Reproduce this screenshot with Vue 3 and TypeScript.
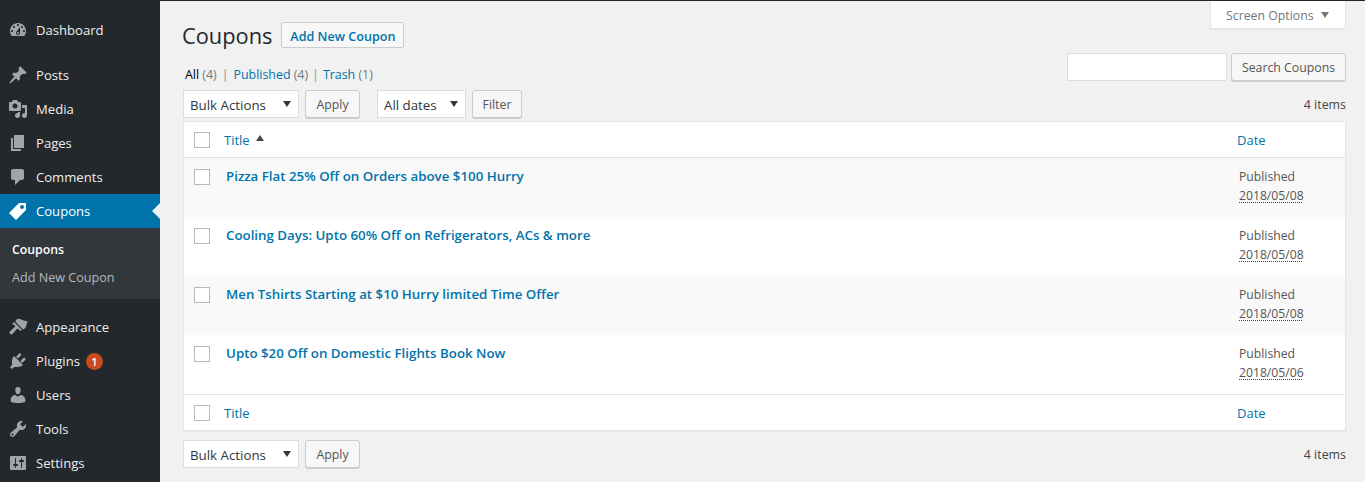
<script setup lang="ts">
interface MenuItem { label: string; icon: string; active?: boolean; badge?: string }
const icons: Record<string, string> = {
  dashboard: 'M3.76 16h12.48c1.1-1.37 1.76-3.11 1.76-5 0-4.42-3.58-8-8-8s-8 3.58-8 8c0 1.89.66 3.63 1.76 5zM10 4c.55 0 1 .45 1 1s-.45 1-1 1-1-.45-1-1 .45-1 1-1zM6 6c.55 0 1 .45 1 1s-.45 1-1 1-1-.45-1-1 .45-1 1-1zm8 0c.55 0 1 .45 1 1s-.45 1-1 1-1-.45-1-1 .45-1 1-1zm-5.370 5.550L12 7v6c0 1.100-.9 2-2 2s-2-.9-2-2c0-.57.24-1.080.63-1.450zM4 10c.55 0 1 .45 1 1s-.45 1-1 1-1-.45-1-1 .45-1 1-1zm12 0c.55 0 1 .45 1 1s-.45 1-1 1-1-.45-1-1 .45-1 1-1zm-5 3c0-.55-.45-1-1-1s-1 .45-1 1 .45 1 1 1 1-.45 1-1z',
  pin: 'M10.440 3.020l1.820-1.820 6.360 6.350-1.830 1.820c-1.050-.68-2.480-.57-3.410.36l-.75.75c-.92.93-1.040 2.350-.35 3.410l-1.830 1.820-2.410-2.410-2.800 2.790c-.42.42-3.380 2.710-3.800 2.290s1.860-3.390 2.280-3.810l2.790-2.790L4.100 9.360l1.830-1.820c1.050.69 2.480.57 3.400-.36l.75-.75c.93-.92 1.050-2.350.36-3.410z',
  media: 'M13 11V4c0-.55-.45-1-1-1h-1.670L9 1H5L3.670 3H2c-.55 0-1 .45-1 1v7c0 .55.45 1 1 1h10c.55 0 1-.45 1-1zM7 4.500c1.380 0 2.500 1.120 2.500 2.500S8.380 9.500 7 9.500 4.500 8.380 4.500 7 5.620 4.500 7 4.500zM14 6h5v10.500c0 1.380-1.120 2.500-2.500 2.500S14 17.880 14 16.500s1.120-2.500 2.500-2.500c.17 0 .34.020.5.050V9h-3V6zm-4 8.050V13h2v3.500c0 1.380-1.120 2.500-2.500 2.500S7 17.880 7 16.500 8.120 14 9.500 14c.17 0 .34.020.5.050z',
  pages: 'M6 15V2h10v13H6zm-1 1h8v2H3V5h2v11z',
  comments: 'M5 2h9c1.100 0 2 .9 2 2v7c0 1.100-.9 2-2 2h-2l-5 5v-5H5c-1.100 0-2-.9-2-2V4c0-1.100.9-2 2-2z',
  tag: 'M11 2h7v7L8 19l-7-7zm3 6c1.100 0 2-.9 2-2s-.9-2-2-2-2 .9-2 2 .9 2 2 2z',
  brush: 'M7.200 4.200L9.300 2c1.700-.8 3.800.4 5.600 1.300l4.800 1.200-1.300 3.500-.9 3-2.600 1.600zM6.300 5.200l7.500 7.500-.7.700c-.4.4-1 .4-1.400 0l-1.400-1.400c-.4-.4-1-.4-1.400 0l-4.800 5.200c-.4.400-1 .400-1.400 0l-1.100-1.100c-.4-.4-.4-1 0-1.400l5.300-4.900c.4-.4.4-1 0-1.400L4.700 7.500c-.4-.4-.4-1 0-1.400z',
  plug: 'M13.110 4.360L9.870 7.600 8 5.730l3.240-3.240c.35-.34 1.050-.2 1.560.32.520.51.660 1.210.310 1.550zm-8 1.770l.91-1.120 9.010 9.010-1.190.84c-.71.71-2.630 1.160-3.820 1.160H6.140L4.900 17.260c-.59.59-1.540.59-2.120 0-.59-.58-.59-1.530 0-2.120l1.240-1.240v-3.880c0-1.130.4-3.190 1.090-3.890zm7.260 3.970l3.240-3.240c.34-.35 1.040-.21 1.550.31.520.51.660 1.210.320 1.560l-3.240 3.240z',
  user: 'M10 9.250c-2.270 0-2.730-3.440-2.730-3.440C7 4.020 7.820 2 9.970 2c2.160 0 2.980 2.020 2.710 3.810 0 0-.41 3.440-2.680 3.440zm0 2.570L12.720 10c2.390 0 4.520 2.330 4.520 4.530v2.490s-3.650 1.130-7.240 1.130c-3.650 0-7.240-1.130-7.240-1.130v-2.490c0-2.250 1.940-4.480 4.470-4.480z',
  wrench: 'M16.680 9.770c-1.340 1.340-3.300 1.670-4.950.99l-5.410 6.520c-.99.99-2.590.99-3.580 0s-.99-2.590 0-3.570l6.520-5.420c-.68-1.650-.35-3.610.99-4.950 1.280-1.280 3.120-1.620 4.720-1.060l-2.890 2.890 2.820 2.820 2.860-2.870c.53 1.580.18 3.410-1.080 4.670zM3.810 16.210c.4.390 1.040.39 1.430 0 .4-.4.400-1.040 0-1.430-.39-.4-1.030-.4-1.430 0-.39.39-.39 1.030 0 1.430z',
  settings: 'M18 16V4c0-.55-.45-1-1-1H3c-.55 0-1 .45-1 1v12c0 .55.45 1 1 1h14c.55 0 1-.45 1-1zM8 11h1c.55 0 1 .45 1 1s-.45 1-1 1H8v1.500c0 .28-.22.5-.5.5s-.5-.22-.5-.5V13H6c-.55 0-1-.45-1-1s.45-1 1-1h1V5.500c0-.28.22-.5.5-.5s.5.22.5.5V11zm5-2h-1c-.55 0-1-.45-1-1s.45-1 1-1h1V5.500c0-.28.22-.5.5-.5s.5.22.5.5V7h1c.55 0 1 .45 1 1s-.45 1-1 1h-1v5.500c0 .28-.22.5-.5.5s-.5-.22-.5-.5V9z'
}
const topItems: MenuItem[] = [{ label: 'Dashboard', icon: 'dashboard' }]
const midItems: MenuItem[] = [
  { label: 'Posts', icon: 'pin' },
  { label: 'Media', icon: 'media' },
  { label: 'Pages', icon: 'pages' },
  { label: 'Comments', icon: 'comments' },
  { label: 'Coupons', icon: 'tag', active: true }
]
const lowItems: MenuItem[] = [
  { label: 'Appearance', icon: 'brush' },
  { label: 'Plugins', icon: 'plug', badge: '1' },
  { label: 'Users', icon: 'user' },
  { label: 'Tools', icon: 'wrench' },
  { label: 'Settings', icon: 'settings' }
]
const rows = [
  { title: 'Pizza Flat 25% Off on Orders above $100 Hurry', date: '2018/05/08' },
  { title: 'Cooling Days: Upto 60% Off on Refrigerators, ACs & more', date: '2018/05/08' },
  { title: 'Men Tshirts Starting at $10 Hurry limited Time Offer', date: '2018/05/08' },
  { title: 'Upto $20 Off on Domestic Flights Book Now', date: '2018/05/06' }
]
</script>

<template>
  <div class="page">
    <aside class="side">
      <ul class="menu first">
        <li v-for="m in topItems" :key="m.label" class="item">
          <svg class="ic" viewBox="0 0 20 20"><path :d="icons[m.icon]" fill-rule="evenodd" /></svg>
          <span>{{ m.label }}</span>
        </li>
      </ul>
      <ul class="menu second">
        <li v-for="m in midItems" :key="m.label" class="item" :class="{ active: m.active }">
          <svg class="ic" viewBox="0 0 20 20"><path :d="icons[m.icon]" fill-rule="evenodd" /></svg>
          <span>{{ m.label }}</span>
        </li>
      </ul>
      <ul class="sub">
        <li class="cur">Coupons</li>
        <li>Add New Coupon</li>
      </ul>
      <ul class="menu third">
        <li v-for="m in lowItems" :key="m.label" class="item">
          <svg class="ic" viewBox="0 0 20 20"><path :d="icons[m.icon]" fill-rule="evenodd" /></svg>
          <span>{{ m.label }}</span>
          <b v-if="m.badge" class="badge">{{ m.badge }}</b>
        </li>
      </ul>
    </aside>

    <main class="main">
      <div class="screen-wrap">
        <div class="screen">Screen Options <i class="tri down"></i></div>
      </div>
      <div class="head">
        <h1>Coupons</h1>
        <a class="add">Add New Coupon</a>
      </div>
      <div class="status-row">
        <div class="status">
          <b>All</b> <span class="n">(4)</span><span class="sep wide">|</span><a>Published</a> <span class="n">(4)</span><span class="sep">|</span><a>Trash</a> <span class="n">(1)</span>
        </div>
        <div class="search">
          <div class="input"></div>
          <button class="btn w115">Search Coupons</button>
        </div>
      </div>
      <div class="bar">
        <div class="sel w116">Bulk Actions<i class="tri dark"></i></div>
        <button class="btn w55">Apply</button>
        <div class="sel w89 ml">All dates<i class="tri dark"></i></div>
        <button class="btn w50">Filter</button>
        <span class="count">4 items</span>
      </div>
      <div class="table">
        <div class="row hd">
          <span class="cb"></span>
          <a class="t">Title</a><i class="tri up"></i>
          <a class="d">Date</a>
        </div>
        <div v-for="(r, i) in rows" :key="r.title" class="row body" :class="{ alt: i % 2 === 0 }">
          <span class="cb"></span>
          <a class="name">{{ r.title }}</a>
          <div class="date">Published<br /><abbr>{{ r.date }}</abbr></div>
        </div>
        <div class="row ft">
          <span class="cb"></span>
          <a class="t">Title</a>
          <a class="d">Date</a>
        </div>
      </div>
      <div class="bar bottom">
        <div class="sel w116">Bulk Actions<i class="tri dark"></i></div>
        <button class="btn w55">Apply</button>
        <span class="count">4 items</span>
      </div>
    </main>
  </div>
</template>

<style>
html, body { margin: 0; background: #f1f1f1; overflow: hidden; }
</style>

<style scoped>
.page { display: flex; width: 1365px; height: 482px; overflow: hidden; font-family: "Open Sans", sans-serif; font-size: 13px; color: #444; background: #f1f1f1; border-top: 1px solid #23282d; box-sizing: border-box; }
ul { list-style: none; margin: 0; padding: 0; }
.side { width: 160px; flex: none; background: #23282d; }
.menu.first { padding-top: 12px; }
.menu.second { margin-top: 11px; }
.menu.third { margin-top: 11px; }
.item { position: relative; height: 34px; display: flex; align-items: center; color: #eee; font-size: 13.1px; }
.item span { margin-left: 8px; }
.ic { width: 20px; height: 20px; margin-left: 8px; fill: #a0a5aa; flex: none; }
.item.active { background: #0073aa; color: #fff; }
.item.active .ic { fill: #fff; }
.item.active::after { content: ""; position: absolute; right: 0; top: 9px; border: 8px solid transparent; border-right-color: #f1f1f1; border-left-width: 0; }
.sub { background: #32373c; height: 71px; padding-top: 8px; box-sizing: border-box; font-size: 12.6px; color: #b4b9be; }
.sub li { height: 28px; line-height: 28px; padding-left: 12px; }
.sub .cur { color: #fff; font-weight: 600; font-size: 12.3px; }
.badge { width: 17px; height: 17px; border-radius: 50%; background: #ca4a1f; color: #fff; font-size: 11px; font-weight: 600; line-height: 17px; text-align: center; margin-left: 6px; }
.main { flex: 1; min-width: 0; padding: 0 19px 0 23px; position: relative; }
.screen-wrap { position: absolute; right: 19px; top: 0; }
.screen { width: 136px; height: 28px; box-sizing: border-box; background: #fff; border: 1px solid #e5e5e5; border-top: 0; box-shadow: 0 1px 1px rgba(0,0,0,.04); padding: 2px 0 0 15px; font-size: 12.3px; color: #72777c; display: flex; align-items: center; }
.tri { display: inline-block; width: 0; height: 0; border-left: 4px solid transparent; border-right: 4px solid transparent; }
.tri.down { border-top: 6px solid #72777c; margin-left: 7px; margin-top: -2px; }
.tri.dark { position: absolute; right: 7px; top: 10px; border-top: 6px solid #32373c; }
.tri.up { border-bottom: 6px solid #444; margin-left: 6px; margin-top: -4px; }
.head { display: flex; align-items: center; height: 30px; margin-top: 20px; }
h1 { margin: 0 0 0 -1px; font-size: 21.8px; font-weight: 400; color: #23282d; line-height: 30px; }
.add { margin: -2px 0 0 9px; height: 26px; width: 123px; text-align: center; line-height: 27px; box-sizing: border-box; border: 1px solid #ccc; border-radius: 2px; background: #f7f7f7; color: #0073aa; font-weight: 600; font-size: 12.6px; white-space: nowrap; }
a { color: #0073aa; }
.status-row { display: flex; justify-content: space-between; align-items: flex-start; height: 37px; margin-top: 2px; }
.status { font-size: 12.4px; color: #666; margin: 11px 0 0 2px; line-height: 22px; }
.status b { color: #000; font-weight: 400; }
.sep { margin: 0 4px; color: #8a8f94; }
.sep.wide { margin: 0 5px; }
.n { color: #72777c; }
.search { display: flex; gap: 4px; }
.input { width: 160px; height: 28px; box-sizing: border-box; background: #fff; border: 1px solid #ddd; }
.btn { height: 28px; box-sizing: border-box; border: 1px solid #ccc; border-radius: 3px; background: #f7f7f7; box-shadow: 0 1px 0 #ccc; color: #555; font: 400 12.3px "Open Sans", sans-serif; padding: 0; }
.w115 { width: 115px; }
.w55 { width: 55px; }
.w50 { width: 50px; }
.bar { display: flex; align-items: center; height: 28px; }
.sel { position: relative; height: 28px; line-height: 28px; box-sizing: border-box; background: #fff; border: 1px solid #ddd; padding-left: 6px; margin-right: 6px; font-size: 13.3px; color: #32373c; }
.w116 { width: 116px; }
.w89 { width: 89px; }
.ml { margin-left: 17px; }
.count { margin-left: auto; font-size: 12.4px; color: #444; }
.table { margin-top: 3px; background: #fff; border: 1px solid #e5e5e5; box-shadow: 0 1px 1px rgba(0,0,0,.04); }
.row { display: flex; align-items: center; position: relative; }
.cb { width: 16px; height: 16px; flex: none; box-sizing: border-box; border: 1px solid #b4b9be; background: #fff; margin-left: 10px; }
.hd { height: 35px; border-bottom: 1px solid #e1e1e1; }
.ft { height: 35px; border-top: 1px solid #e1e1e1; }
.t { margin-left: 14px; font-size: 13px; }
.d { position: absolute; left: 1053px; font-size: 13px; }
.body { height: 59px; align-items: flex-start; padding-top: 9px; box-sizing: border-box; }
.body .cb { margin-top: 2px; }
.alt { background: #f9f9f9; }
.name { margin-left: 16px; font-weight: 600; font-size: 13.3px; line-height: 19px; }
.date { position: absolute; left: 1055px; top: 9px; font-size: 12.2px; line-height: 19px; color: #555; }
abbr { text-decoration: underline dotted #444; text-underline-offset: 2px; }
.bottom { margin-top: 9px; }
</style>
